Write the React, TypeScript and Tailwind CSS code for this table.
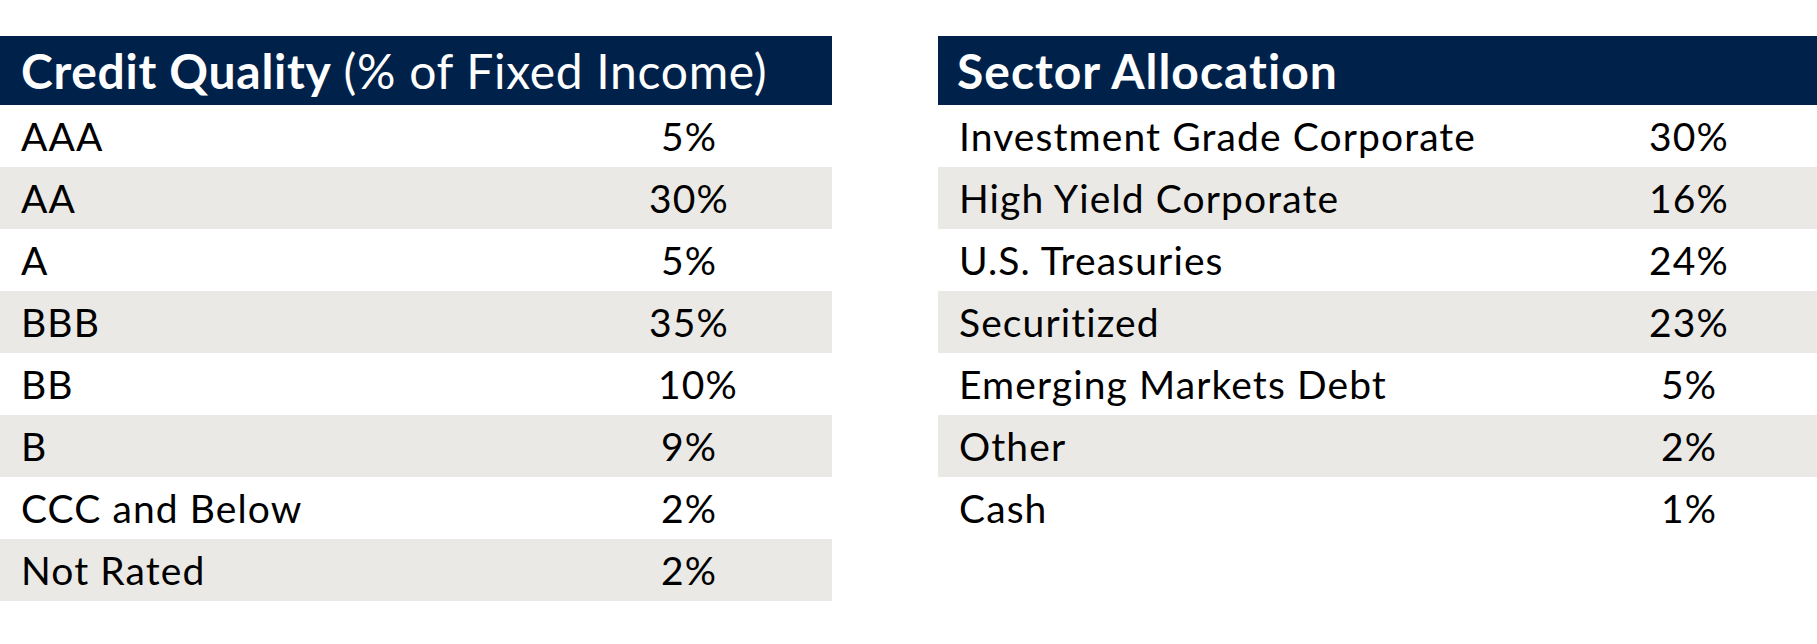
import React from "react";

type Row = { label: string; value: string; nudge?: boolean };

const CREDIT: Row[] = [
  { label: "AAA", value: "5%" },
  { label: "AA", value: "30%" },
  { label: "A", value: "5%" },
  { label: "BBB", value: "35%" },
  { label: "BB", value: "10%", nudge: true },
  { label: "B", value: "9%" },
  { label: "CCC and Below", value: "2%" },
  { label: "Not Rated", value: "2%" },
];

const SECTORS: Row[] = [
  { label: "Investment Grade Corporate", value: "30%" },
  { label: "High Yield Corporate", value: "16%" },
  { label: "U.S. Treasuries", value: "24%" },
  { label: "Securitized", value: "23%" },
  { label: "Emerging Markets Debt", value: "5%" },
  { label: "Other", value: "2%" },
  { label: "Cash", value: "1%" },
];

function TableRows({ rows, valueClass }: { rows: Row[]; valueClass: string }) {
  return (
    <div>
      {rows.map((r, i) => (
        <div
          key={r.label}
          className={`flex h-[62px] items-center pl-[21px] text-[39px] tracking-[1.1px] text-black ${
            i % 2 === 1 ? "bg-[#ebe9e5]" : "bg-white"
          }`}
        >
          <span className="flex-1 whitespace-nowrap">{r.label}</span>
          <span className={`${valueClass} text-center ${r.nudge ? "pl-[18px]" : ""}`}>
            {r.value}
          </span>
        </div>
      ))}
    </div>
  );
}

export default function App() {
  return (
    <div
      className="flex min-h-[644px] gap-[106px] bg-white pt-[36px]"
      style={{ fontFamily: "Lato, 'Open Sans', sans-serif" }}
    >
      {/* Credit quality */}
      <div className="w-[832px] shrink-0">
        <div className="flex h-[69px] items-center bg-[#00224a] pl-[21px] text-[48px] tracking-[0.7px] text-white whitespace-nowrap">
          <span className="font-bold">Credit Quality</span>
          <span className="ml-[12px]">(% of Fixed Income)</span>
        </div>
        <TableRows rows={CREDIT} valueClass="w-[100px] mr-[93px]" />
      </div>

      {/* Sector allocation */}
      <div className="flex-1">
        <div className="flex h-[69px] items-center bg-[#00224a] pl-[19px] text-[48px] tracking-[1px] text-white">
          <span className="font-bold">Sector Allocation</span>
        </div>
        <TableRows rows={SECTORS} valueClass="w-[100px] mr-[78px]" />
      </div>
    </div>
  );
}
